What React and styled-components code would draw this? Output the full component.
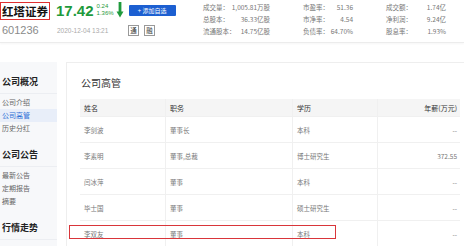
import styled, { createGlobalStyle } from "styled-components"

const GlobalStyle = createGlobalStyle`
    body {
        margin: 0;
        background: #fff;
        font-family: "Liberation Sans", "Noto Sans CJK SC", sans-serif;
    }
`
const Page = styled.div`
    width: 464px;
    height: 246px;
    overflow: hidden;
    position: relative;
`
const Header = styled.div`
    height: 42px;
    display: flex;
    border-bottom: 1px solid #ececec;
    box-shadow: 0 1px 2px rgba(0,0,0,0.04);
`
const Quote = styled.div`
    width: 203px;
    flex-shrink: 0;
    display: flex;
    flex-direction: column;
`
const QuoteRow = styled.div`
    height: 20px;
    display: flex;
    align-items: center;
    white-space: nowrap;
    & > * { flex-shrink: 0; }
`
const StockName = styled.span`
    font-family: "Noto Sans CJK SC", sans-serif;
    font-weight: 700;
    font-size: 11.5px;
    line-height: 16px;
    color: #111;
    border: 1px solid #e03030;
    padding: 0 1px;
    margin-top: 1px;
`
const Price = styled.span`
    font-size: 15px;
    font-weight: 700;
    color: #1f9a3c;
    margin-left: 6px;
`
const Change = styled.div`
    display: flex;
    flex-direction: column;
    font-size: 6px;
    line-height: 7px;
    color: #1f9a3c;
    width: 18px;
    margin-left: 3px;
    margin-top: -1px;
`
const Arrow = styled.svg`
    width: 8px;
    height: 16px;
    margin: 0 5px 0 1px;
`
const AddButton = styled.span`
    background: #1c5fd1;
    color: #fff;
    font-family: "Noto Sans CJK SC", sans-serif;
    font-size: 6px;
    line-height: 11px;
    height: 11px;
    width: 47px;
    text-align: center;
    border-radius: 1px;
`
const Code = styled.span`
    font-size: 11px;
    color: #8a8a8a;
    margin-left: 2px;
    width: 55px;
`
const Time = styled.span`
    font-size: 6.5px;
    color: #aaa;
    width: 71px;
`
const Tag = styled.span`
    width: 9px;
    height: 9px;
    border: 1px solid #999;
    font-family: "Noto Sans CJK SC", sans-serif;
    font-size: 6.5px;
    line-height: 9px;
    text-align: center;
    color: #333;
    margin-right: ${p => p.$gap || 0}px;
`
const Stats = styled.div`
    display: grid;
    grid-template-columns: 67px 50px 60px;
    column-gap: 33px;
    grid-auto-rows: 12px;
    padding-top: 1px;
    font-family: "Noto Sans CJK SC", sans-serif;
    font-size: 6.5px;
    color: #777;
`
const Stat = styled.div`
    display: flex;
    justify-content: space-between;
    align-items: center;
    line-height: 12px;
    white-space: nowrap;
`
const Body = styled.div`
    display: flex;
    padding-top: 19px;
`
const Sidebar = styled.div`
    width: 57px;
    height: 190px;
    background: #f7f8fa;
    margin-right: 9px;
    padding-top: 8px;
    font-family: "Noto Sans CJK SC", sans-serif;
`
const Group = styled.div`
    margin-bottom: 8px;
`
const GroupTitle = styled.div`
    height: 24px;
    line-height: 24px;
    font-size: 9px;
    font-weight: 700;
    color: #222;
    padding-left: 2px;
    border-bottom: 1px solid #eceef2;
    box-sizing: border-box;
`
const Items = styled.div`
    padding-top: 2px;
`
const Item = styled.div`
    height: 13px;
    line-height: 13px;
    font-size: 7px;
    padding-left: 2px;
    color: ${p => (p.$active ? "#2d6fd6" : "#666")};
    background: ${p => (p.$active ? "#e8eef9" : "transparent")};
`
const Card = styled.div`
    flex: 1;
    height: 190px;
    border: 1px solid #eeeeee;
    border-right: none;
    padding: 13px 4px 0 13px;
    font-family: "Noto Sans CJK SC", sans-serif;
`
const CardTitle = styled.div`
    font-size: 10px;
    line-height: 14px;
    color: #333;
    margin-left: 1px;
`
const Table = styled.div`
    margin-top: 9px;
`
const Row = styled.div`
    position: relative;
    display: grid;
    grid-template-columns: 86px 127px 85px 82px;
    height: ${p => (p.$head ? 18 : 26)}px;
    background: ${p => (p.$head ? "#f5f5f5" : "#fff")};
    border-bottom: 1px solid #f0f0f0;
    box-sizing: border-box;
    font-size: ${p => (p.$head ? 7 : 6.5)}px;
    color: ${p => (p.$head ? "#333" : "#777")};
`
const Cell = styled.div`
    display: flex;
    align-items: center;
    justify-content: ${p => (p.$right ? "flex-end" : "flex-start")};
    padding: 0 ${p => (p.$right ? 3 : 4)}px;
    border-right: ${p => (p.$last ? "none" : "1px solid #f0f0f0")};
    white-space: nowrap;
`
const Highlight = styled.div`
    position: absolute;
    left: -11px;
    top: 4px;
    width: 265px;
    height: 12px;
    border: 1px solid #d9353a;
`

const stats = [
    ["成交量：", "1,005.81万股"], ["市盈率：", "51.36"], ["成交额：", "1.74亿"],
    ["总股本：", "36.33亿股"], ["市净率：", "4.54"], ["净利润：", "9.24亿"],
    ["流通股本：", "14.75亿股"], ["负债率：", "64.70%"], ["股息率：", "1.93%"],
]

const managers = [
    ["李剑波", "董事长", "本科", "--"],
    ["李素明", "董事,总裁", "博士研究生", "372.55"],
    ["闫冰萍", "董事", "本科", "--"],
    ["毕士国", "董事", "硕士研究生", "--"],
    ["李双友", "董事", "本科", "--"],
]

function App() {
    return (
        <Page>
            <GlobalStyle />
            <Header>
                <Quote>
                    <QuoteRow>
                        <StockName>红塔证券</StockName>
                        <Price>17.42</Price>
                        <Change>
                            <span>0.24</span>
                            <span>1.36%</span>
                        </Change>
                        <Arrow viewBox="0 0 8 16">
                            <rect x="2.6" y="0" width="2.8" height="11" fill="#1f9a3c" />
                            <path d="M0.5 9.5 L7.5 9.5 L4 15.5 Z" fill="#1f9a3c" />
                        </Arrow>
                        <AddButton>+ 添加自选</AddButton>
                    </QuoteRow>
                    <QuoteRow>
                        <Code>601236</Code>
                        <Time>2020-12-04 13:21</Time>
                        <Tag $gap={5}>通</Tag>
                        <Tag>融</Tag>
                    </QuoteRow>
                </Quote>
                <Stats>
                    {stats.map(([label, value]) => (
                        <Stat key={label}>
                            <span>{label}</span>
                            <span>{value}</span>
                        </Stat>
                    ))}
                </Stats>
            </Header>
            <Body>
                <Sidebar>
                    <Group>
                        <GroupTitle>公司概况</GroupTitle>
                        <Items>
                            <Item>公司介绍</Item>
                            <Item $active>公司高管</Item>
                            <Item>历史分红</Item>
                        </Items>
                    </Group>
                    <Group>
                        <GroupTitle>公司公告</GroupTitle>
                        <Items>
                            <Item>最新公告</Item>
                            <Item>定期报告</Item>
                            <Item>摘要</Item>
                        </Items>
                    </Group>
                    <Group>
                        <GroupTitle>行情走势</GroupTitle>
                    </Group>
                </Sidebar>
                <Card>
                    <CardTitle>公司高管</CardTitle>
                    <Table>
                        <Row $head>
                            <Cell>姓名</Cell>
                            <Cell>职务</Cell>
                            <Cell>学历</Cell>
                            <Cell $right $last>年薪(万元)</Cell>
                        </Row>
                        {managers.map((m, i) => (
                            <Row key={m[0]}>
                                <Cell>{m[0]}</Cell>
                                <Cell>{m[1]}</Cell>
                                <Cell>{m[2]}</Cell>
                                <Cell $right $last>{m[3]}</Cell>
                                {i === managers.length - 1 && <Highlight />}
                            </Row>
                        ))}
                    </Table>
                </Card>
            </Body>
        </Page>
    )
}
export default App
